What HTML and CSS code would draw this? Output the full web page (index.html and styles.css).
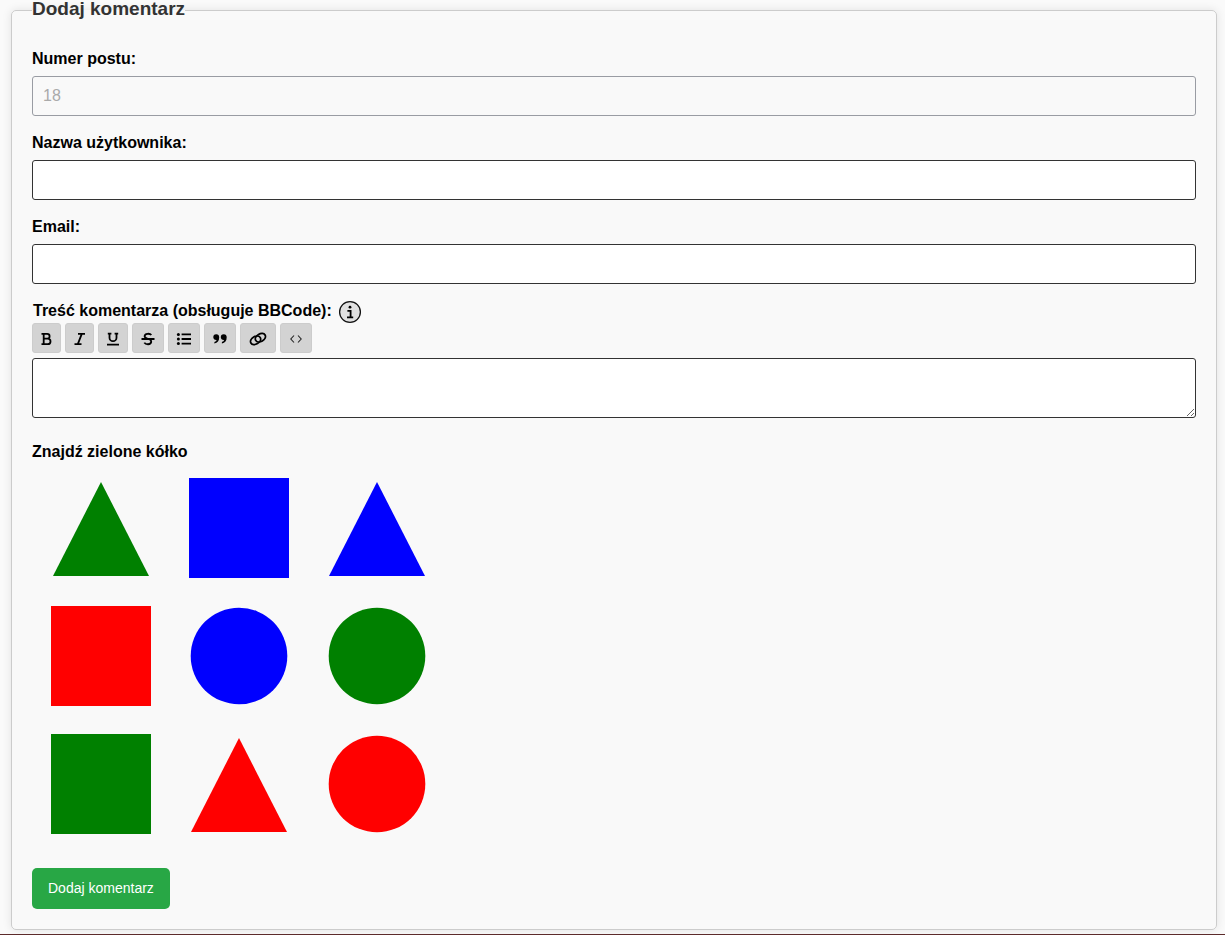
FILE: index.html
```html
<!DOCTYPE html>
<html lang="pl">
<head>
<meta charset="utf-8">
<meta name="viewport" content="width=device-width, initial-scale=1">
<title>Dodaj komentarz</title>
<link rel="stylesheet" href="styles.css">
</head>
<body>
<main class="page">
<form>
<fieldset class="comment-form">
  <legend>Dodaj komentarz</legend>

  <div class="field">
    <label for="post">Numer postu:</label>
    <input class="control" id="post" type="text" value="18" disabled>
  </div>
  <div class="field">
    <label for="user">Nazwa użytkownika:</label>
    <input class="control" id="user" type="text">
  </div>
  <div class="field">
    <label for="email">Email:</label>
    <input class="control" id="email" type="email">
  </div>

  <div class="label-row">
    <label for="body">Treść komentarza (obsługuje BBCode):</label>
    <button class="info" type="button" aria-label="Informacje o BBCode">
      <svg width="24" height="24" viewBox="0 0 24 24"><circle cx="12" cy="12" r="10.4" fill="#e0e0e0" stroke="#111" stroke-width="1.3"/><circle cx="12" cy="7.2" r="1.4"/><path d="M9.4 10.8h3.2v6.6M9 17.4h6.2" fill="none" stroke="#000" stroke-width="1.8"/></svg>
    </button>
  </div>
  <div class="toolbar" role="toolbar" aria-label="Formatowanie">
    <button class="tool" type="button" aria-label="Pogrubienie"><svg width="12" height="14" viewBox="0 0 12 14"><path d="M.5 1.9h5.7a2.3 2.3 0 0 1 0 4.8H3h3.8a2.7 2.7 0 0 1 0 5.4H.5M2.7 1.9v10.2" class="stroke"/></svg></button>
    <button class="tool" type="button" aria-label="Kursywa"><svg width="12" height="14" viewBox="0 0 12 14"><path d="M4 1.9h7M.5 12.1h7M7.8 1.9l-4 10.2" class="stroke"/></svg></button>
    <button class="tool medium" type="button" aria-label="Podkreślenie"><svg width="14" height="14" viewBox="0 0 14 14"><path d="M1.8 1.7h3.6M8.6 1.7h3.6M3.5 1.7v4a3.5 3.5 0 0 0 7 0v-4M1 12.6h12" class="stroke"/></svg></button>
    <button class="tool wide" type="button" aria-label="Przekreślenie"><svg width="16" height="14" viewBox="0 0 16 14"><path d="M1.5 7h13M11.3 3C10 1.2 4.7 1.1 4.6 4.3c0 1.9 2.3 2.2 3.9 2.7 2 .6 2.9 1.2 2.7 2.9-.3 3.2-5.6 2.8-6.9.7" class="stroke"/></svg></button>
    <button class="tool wide" type="button" aria-label="Lista"><svg width="16" height="14" viewBox="0 0 16 14"><path d="M5.6 2.4H15M5.6 7H15M5.6 11.6H15" class="stroke"/><circle cx="2.4" cy="2.4" r="1.5"/><circle cx="2.4" cy="7" r="1.5"/><circle cx="2.4" cy="11.6" r="1.5"/></svg></button>
    <button class="tool wide" type="button" aria-label="Cytat"><svg width="14" height="14" viewBox="0 0 14 14"><path d="M6.2 5.2c0 3.6-1.6 5.7-4.8 6.3V9.9c1.4-.4 2.1-1 2.2-1.9C1.700 8.200.3 7 .3 5.300A2.900 2.900 0 0 1 6.200 5.200zM13.700 5.200c0 3.600-1.600 5.700-4.800 6.300V9.900c1.400-.4 2.100-1 2.200-1.900-1.900.2-3.300-1-3.300-2.700A2.900 2.900 0 0 1 13.700 5.200z"/></svg></button>
    <button class="tool widest" type="button" aria-label="Odnośnik"><svg width="18" height="14" viewBox="0 0 18 14"><ellipse cx="6.600" cy="8.300" rx="5.400" ry="3.800" transform="rotate(-30 6.600 8.300)" class="stroke"/><ellipse cx="11.400" cy="5.700" rx="5.400" ry="3.800" transform="rotate(-30 11.400 5.700)" class="stroke"/></svg></button>
    <button class="tool wide" type="button" aria-label="Kod"><svg width="12" height="12" viewBox="0 0 12 12"><path d="M4 2.500L.8 6 4 9.500M8 2.500L11.200 6 8 9.500" class="stroke thin"/></svg></button>
  </div>
  <textarea class="control message" id="body"></textarea>

  <p class="captcha-title" id="captcha">Znajdź zielone kółko</p>
  <div class="captcha" role="group" aria-labelledby="captcha">
    <button class="shape green" type="button" aria-label="Zielony trójkąt"><svg viewBox="0 0 128 128"><path d="M64 18l48 94H16z"/></svg></button>
    <button class="shape blue" type="button" aria-label="Niebieski kwadrat"><svg viewBox="0 0 128 128"><path d="M14 14h100v100H14z"/></svg></button>
    <button class="shape blue" type="button" aria-label="Niebieski trójkąt"><svg viewBox="0 0 128 128"><path d="M64 18l48 94H16z"/></svg></button>
    <button class="shape red" type="button" aria-label="Czerwony kwadrat"><svg viewBox="0 0 128 128"><path d="M14 14h100v100H14z"/></svg></button>
    <button class="shape blue" type="button" aria-label="Niebieskie kółko"><svg viewBox="0 0 128 128"><circle cx="64" cy="64" r="48.3"/></svg></button>
    <button class="shape green" type="button" aria-label="Zielone kółko"><svg viewBox="0 0 128 128"><circle cx="64" cy="64" r="48.3"/></svg></button>
    <button class="shape green" type="button" aria-label="Zielony kwadrat"><svg viewBox="0 0 128 128"><path d="M14 14h100v100H14z"/></svg></button>
    <button class="shape red" type="button" aria-label="Czerwony trójkąt"><svg viewBox="0 0 128 128"><path d="M64 18l48 94H16z"/></svg></button>
    <button class="shape red" type="button" aria-label="Czerwone kółko"><svg viewBox="0 0 128 128"><circle cx="64" cy="64" r="48.3"/></svg></button>
  </div>

  <button class="submit" type="submit">Dodaj komentarz</button>
</fieldset>
</form>
</main>
<footer class="footer"></footer>
</body>
</html>
```

FILE: styles.css
```css
* { box-sizing: border-box; }

body {
  margin: 0;
  background: #fafafa;
  color: #000;
  font: 16px/18px "Liberation Sans", Arial, sans-serif;
}

.page { padding: 0 8px 4px 11px; }

.comment-form {
  min-width: 0;
  margin: 0;
  padding: 30px 20px 20px;
  border: 1px solid #ccc;
  border-radius: 5px;
  background: #f9f9f9;
  box-shadow: 0 0 10px rgba(0, 0, 0, 0.1);
}

legend {
  padding: 0 0 2px;
  color: #333;
  font-size: 19px;
  font-weight: bold;
  line-height: 18px;
}

label, .captcha-title { font-weight: bold; }

.field {
  display: flex;
  flex-direction: column;
  gap: 8px;
  margin-bottom: 18px;
}

.control {
  display: block;
  width: 100%;
  height: 40px;
  padding: 10px;
  border: 1px solid #333;
  border-radius: 3px;
  background: #fff;
  font: 16px/18px "Liberation Sans", Arial, sans-serif;
}

.control:disabled {
  border-color: #999ca3;
  background: #f9f9f9;
  color: #aaa;
}

.label-row {
  display: flex;
  align-items: center;
  gap: 6px;
  height: 18px;
  padding-left: 1px;
}

.info {
  display: flex;
  padding: 2px 0 0;
  border: 0;
  background: none;
}

.toolbar {
  display: flex;
  gap: 4px;
  margin: 3px 0 5px;
}

.tool {
  display: flex;
  align-items: center;
  justify-content: center;
  width: 29px;
  height: 30px;
  padding: 2px 0 0;
  border: 1px solid #ccc;
  border-radius: 3px;
  background: #d3d3d3;
}

.tool.medium { width: 30px; }
.tool.wide { width: 32px; }
.tool.widest { width: 36px; }

.stroke { fill: none; stroke: #000; stroke-width: 1.8; }
.stroke.thin { stroke: #222; stroke-width: 1.1; }

.message { height: 60px; resize: vertical; }

.captcha-title { margin: 25px 0 3px; }

.captcha {
  display: grid;
  grid-template-columns: repeat(3, 128px);
  column-gap: 10px;
  margin: 0 0 20px 5px;
}

.shape {
  display: block;
  width: 128px;
  height: 128px;
  padding: 0;
  border: 0;
  background: none;
}

.shape svg { display: block; fill: currentColor; }
.green { color: green; }
.blue { color: blue; }
.red { color: red; }

.submit {
  display: block;
  padding: 12px 16px;
  border: 0;
  border-radius: 5px;
  background: #28a745;
  color: #fff;
  font: 14px/17px "Liberation Sans", Arial, sans-serif;
}

.footer { height: 1px; background: #5c2b2b; }
```
